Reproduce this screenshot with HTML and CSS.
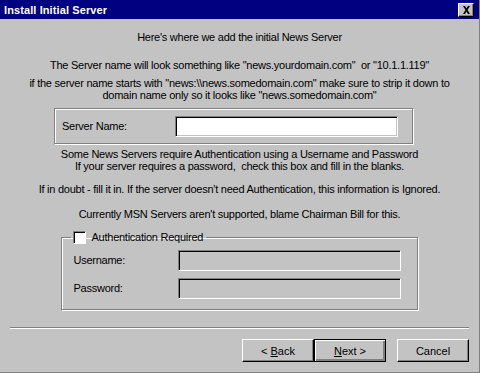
FILE: index.html
```html
<!DOCTYPE html>
<html lang="en">
<head>
    <meta charset="UTF-8">
    <title>Install Initial Server</title>
    <link rel="stylesheet" href="styles.css">
</head>
<body>
    <div class="dialog">
        <div class="titlebar">
            <span class="title">Install Initial Server</span>
            <button class="close-btn" aria-label="Close">
                <svg width="9" height="8" viewBox="0 0 9 8">
                    <path d="M1 0h2l1.5 2.5L6 0h2L5.5 4 8 8H6L4.5 5.5 3 8H1l2.5-4z" fill="#000"/>
                </svg>
            </button>
        </div>

        <div class="content">
            <p class="intro">Here's where we add the initial News Server</p>

            <p class="hint example">The Server name will look something like "news.yourdomain.com" &nbsp;or "10.1.1.119"</p>
            <p class="hint strip">if the server name starts with "news:\\news.somedomain.com" make sure to strip it down to<br>domain name only so it looks like "news.somedomain.com"</p>

            <div class="server-box">
                <label class="field-label">Server Name:</label>
                <input class="field sunken" type="text">
            </div>

            <p class="hint auth-note">Some News Servers require Authentication using a Username and Password<br>If your server requires a password, &nbsp;check this box and fill in the blanks.</p>
            <p class="hint doubt">If in doubt - fill it in. If the server doesn't need Authentication, this information is Ignored.</p>
            <p class="hint msn">Currently MSN Servers aren't supported, blame Chairman Bill for this.</p>

            <fieldset class="auth-box">
                <legend>
                    <span class="checkbox"></span>
                    Authentication Required
                </legend>
                <div class="auth-row">
                    <label class="field-label">Username:</label>
                    <span class="field sunken disabled"></span>
                </div>
                <div class="auth-row">
                    <label class="field-label">Password:</label>
                    <span class="field sunken disabled"></span>
                </div>
            </fieldset>
        </div>

        <div class="separator"></div>

        <div class="buttons">
            <button class="btn"><span>&lt; <u>B</u>ack</span></button>
            <button class="btn default"><span><u>N</u>ext &gt;</span></button>
            <button class="btn cancel">Cancel</button>
        </div>
    </div>
</body>
</html>
```

FILE: styles.css
```css
* {
    margin: 0;
    padding: 0;
    box-sizing: border-box;
}

body {
    font-family: "Liberation Sans", Arial, sans-serif;
    font-size: 11px;
    letter-spacing: -0.25px;
    color: #000;
    background: #c3c3c3;
}

.dialog {
    width: 480px;
    height: 373px;
    background: #c3c3c3;
    border-right: 1px solid #808080;
    border-bottom: 1px solid #808080;
    display: flex;
    flex-direction: column;
}

.titlebar {
    height: 19px;
    background: #000080;
    display: flex;
    align-items: center;
    justify-content: space-between;
    padding: 0 5px 0 4px;
}

.title {
    color: #fff;
    font-weight: bold;
    font-size: 11px;
    letter-spacing: 0.1px;
}

.close-btn {
    width: 16px;
    height: 14px;
    background: #c3c3c3;
    border: 1px solid;
    border-color: #fff #000 #000 #fff;
    box-shadow: inset -1px -1px 0 #808080;
    display: flex;
    align-items: center;
    justify-content: center;
}

.content {
    padding-top: 12px;
    display: flex;
    flex-direction: column;
    align-items: center;
}

.intro,
.hint {
    text-align: center;
    line-height: 12px;
}

.example {
    margin-top: 16px;
}

.strip {
    margin-top: 6px;
}

.server-box {
    width: 359px;
    height: 36px;
    margin: 7px 0 0 -12px;
    border: 1px solid #808080;
    box-shadow: 1px 1px 0 #fff, inset 1px 1px 0 #fff;
    display: flex;
    align-items: center;
    padding: 0 14px 0 7px;
    justify-content: space-between;
}

.field-label {
    line-height: 13px;
}

.field {
    display: block;
    width: 223px;
    height: 21px;
    background: #fff;
    font: inherit;
}

.sunken {
    border: 1px solid;
    border-color: #808080 #fff #fff #808080;
    box-shadow: inset 1px 1px 0 #000, inset -1px -1px 0 #c3c3c3;
}

.field.disabled {
    background: #c3c3c3;
}

.auth-note {
    margin-top: 4px;
}

.doubt {
    margin-top: 11px;
}

.msn {
    margin-top: 13px;
}

.auth-box {
    width: 357px;
    height: 79px;
    margin: 11px 0 0 -1px;
    border: 1px solid #808080;
    box-shadow: 1px 1px 0 #fff, inset 1px 1px 0 #fff;
    padding: 6px 16px 0 12px;
}

.auth-box legend {
    display: flex;
    align-items: center;
    gap: 6px;
    padding: 0 3px 0 2px;
    margin-left: -3px;
    line-height: 13px;
}

.checkbox {
    width: 13px;
    height: 13px;
    background: #fff;
    border: 1px solid;
    border-color: #808080 #fff #fff #808080;
    box-shadow: inset 1px 1px 0 #000;
}

.auth-row {
    display: flex;
    align-items: center;
    justify-content: space-between;
    margin-bottom: 7px;
}

.separator {
    margin: 17px 10px 0 10px;
    height: 2px;
    border-top: 1px solid #808080;
    border-bottom: 1px solid #fff;
}

.buttons {
    display: flex;
    justify-content: flex-end;
    padding: 10px 10px 0 0;
}

.btn {
    width: 72px;
    height: 23px;
    font: inherit;
    background: #c3c3c3;
    border: 1px solid;
    border-color: #fff #000 #000 #fff;
    box-shadow: inset -1px -1px 0 #808080;
}

.btn.default {
    border: 1px solid #000;
    box-shadow: inset 1px 1px 0 #fff, inset -2px -2px 0 #808080;
    outline: none;
}

.btn.cancel {
    margin-left: 11px;
}
```
